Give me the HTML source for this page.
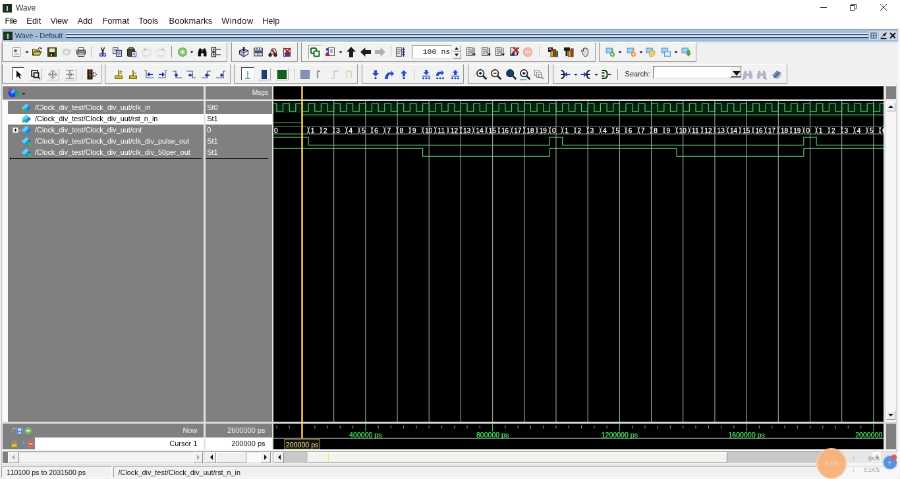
<!DOCTYPE html>
<html><head><meta charset="utf-8"><title>Wave</title>
<style>
html,body{margin:0;padding:0;width:900px;height:479px;overflow:hidden;background:#f0f0f0}
#root{position:absolute;left:0;top:0;width:1366px;height:728px;transform:scale(0.658858);transform-origin:0 0;background:#f0f0f0;font-family:"Liberation Sans",sans-serif;font-size:11px;color:#000;overflow:hidden;will-change:transform}
#root div{position:absolute;box-sizing:border-box}
#root svg{position:absolute;overflow:visible}
.t{white-space:pre}
.grp{background:#f2f2f2;border-left:1px solid #8c8c8c;border-top:1px solid #fff;border-right:1px solid #989898;border-bottom:1px solid #989898}
.sep{background:#a8a8a8;width:1px}
.sb{background:#f0f0f0}
.btn{background:#f0f0f0;border:1px solid #fff;border-right-color:#8a8a8a;border-bottom-color:#8a8a8a}
</style></head><body><div id="root">

<div class="" style="left:0.0px;top:0.0px;width:1366.0px;height:23.22px;background:#fff"></div>
<div class="" style="left:0.0px;top:23.22px;width:1366.0px;height:19.88px;background:#fff"></div>
<svg style="left:3.95px;top:5.77px" width="14" height="13" viewBox="0 0 14 13"><rect width="14" height="13" fill="#23281c"/><rect x="1.5" y="4" width="4" height="6" fill="#0d3b1e"/><rect x="8.5" y="4" width="4" height="6" fill="#0d3b1e"/><rect x="6" y="3" width="2" height="8" fill="#c9d2c0"/></svg>
<div class="t" style="left:23.98px;top:4.29px;height:16px;line-height:16px;font-size:12px;color:#2a2a2a">Wave</div>
<svg style="left:1241.59px;top:2.619999999999999px" width="16" height="16" viewBox="0 0 16 16"><path d="M3 8.5h10" stroke="#222" stroke-width="1" fill="none"/></svg>
<svg style="left:1287.42px;top:2.619999999999999px" width="16" height="16" viewBox="0 0 16 16"><path d="M3.5 5.5h7v7h-7zM5.5 5.5v-2h7v7h-2" stroke="#222" stroke-width="1" fill="none"/></svg>
<svg style="left:1333.11px;top:2.619999999999999px" width="16" height="16" viewBox="0 0 16 16"><path d="M3 3l10 10M13 3L3 13" stroke="#222" stroke-width="1" fill="none"/></svg>
<div class="t" style="left:7.59px;top:24.48px;height:16px;line-height:16px;font-size:12.8px;letter-spacing:-0.7px;color:#111">File</div>
<div class="t" style="left:40.37px;top:24.48px;height:16px;line-height:16px;font-size:12.8px;letter-spacing:0px;color:#111">Edit</div>
<div class="t" style="left:76.5px;top:24.48px;height:16px;line-height:16px;font-size:12.8px;letter-spacing:-0.3px;color:#111">View</div>
<div class="t" style="left:117.48px;top:24.48px;height:16px;line-height:16px;font-size:12.8px;letter-spacing:0px;color:#111">Add</div>
<div class="t" style="left:155.42px;top:24.48px;height:16px;line-height:16px;font-size:12.8px;letter-spacing:0px;color:#111">Format</div>
<div class="t" style="left:210.36px;top:24.48px;height:16px;line-height:16px;font-size:12.8px;letter-spacing:0px;color:#111">Tools</div>
<div class="t" style="left:256.5px;top:24.48px;height:16px;line-height:16px;font-size:12.8px;letter-spacing:0.2px;color:#111">Bookmarks</div>
<div class="t" style="left:336.19px;top:24.48px;height:16px;line-height:16px;font-size:12.8px;letter-spacing:0.5px;color:#111">Window</div>
<div class="t" style="left:398.11px;top:24.48px;height:16px;line-height:16px;font-size:12.8px;letter-spacing:0px;color:#111">Help</div>
<div class="" style="left:3.04px;top:43.71px;width:1360.38px;height:19.73px;background:#a6bdd9;border-top:1px solid #93a8c2;border-bottom:1px solid #8fa4bf"></div>
<svg style="left:4.55px;top:47.96px" width="14" height="13" viewBox="0 0 14 13"><rect width="14" height="13" fill="#1d2a1c"/><rect x="1.5" y="3" width="4.5" height="7" fill="#0c4a22"/><rect x="8" y="3" width="4.5" height="7" fill="#0c4a22"/><rect x="6" y="3" width="2" height="8" fill="#b9c8b6"/></svg>
<div class="t" style="left:22.77px;top:46.34px;height:16px;line-height:16px;font-size:11px;color:#1b3552">Wave - Default</div>
<div class="" style="left:1057.89px;top:63.44px;width:305.53px;height:3.95px;background:#e4ebf5"></div>
<div class="" style="left:100.17px;top:50.09px;width:1218.02px;height:1.52px;background:#dbe9f8"></div>
<div class="" style="left:100.17px;top:51.6px;width:1218.02px;height:1.82px;background:#2b435f"></div>
<div class="" style="left:100.17px;top:54.03px;width:1218.02px;height:1.82px;background:#dbe9f8"></div>
<div class="" style="left:100.17px;top:56.46px;width:1218.02px;height:1.82px;background:#2b435f"></div>
<svg style="left:1319.23px;top:46.88px" width="14" height="14" viewBox="0 0 14 14"><rect width="14" height="14" fill="#c9d8ea"/><path d="M3 3h8v8h-8zM7 3v8M3 7h8" stroke="#36506e" stroke-width="1.2" fill="none"/></svg>
<svg style="left:1333.65px;top:46.88px" width="14" height="14" viewBox="0 0 14 14"><rect width="14" height="14" fill="#c9d8ea"/><path d="M3 10l4-4 2 2 3-6-6 3 2 2z" fill="#111"/><path d="M2.5 11.5h9" stroke="#111" stroke-width="1.5"/></svg>
<svg style="left:1348.38px;top:46.88px" width="14" height="14" viewBox="0 0 14 14"><rect width="14" height="14" fill="#c9d8ea"/><path d="M3 3l8 8M11 3l-8 8" stroke="#111" stroke-width="2" fill="none"/></svg>
<div class="grp" style="left:3.49px;top:64.2px;width:341.8px;height:30.2px;"></div>
<div class="grp" style="left:350.61px;top:64.2px;width:100.93px;height:30.2px;"></div>
<div class="grp" style="left:456.85px;top:64.2px;width:446.68px;height:30.2px;"></div>
<div class="grp" style="left:908.69px;top:64.2px;width:148.74px;height:30.2px;"></div>
<div class="grp" style="left:3.49px;top:97.44px;width:150.87px;height:29.29px;"></div>
<div class="grp" style="left:159.37px;top:97.44px;width:190.63px;height:29.29px;"></div>
<div class="grp" style="left:355.16px;top:97.44px;width:188.2px;height:29.29px;"></div>
<div class="grp" style="left:548.98px;top:97.44px;width:155.27px;height:29.29px;"></div>
<div class="grp" style="left:710.32px;top:97.44px;width:122.94px;height:29.29px;"></div>
<div class="grp" style="left:839.33px;top:97.44px;width:355.92px;height:29.29px;"></div>
<svg style="left:17.35px;top:70.62px" width="16" height="16" viewBox="0 0 16 16"><rect x="2.5" y="1.5" width="11" height="13" fill="#fdfdfd" stroke="#8a8a8a"/><rect x="4.5" y="4" width="4" height="4" fill="#5a5f66"/><path d="M9.5 5h2M4.5 10h7M4.5 12h7" stroke="#9a9a9a"/></svg>
<svg style="left:48.16px;top:70.62px" width="16" height="16" viewBox="0 0 16 16"><path d="M1.500 13V3.500h4l1 1.500h5.500V7" fill="#cfc557" stroke="#2e2e0c"/><path d="M1.500 13l3-6h10.500l-3 6z" fill="#a89c26" stroke="#2e2e0c"/><path d="M4 10.500h8" stroke="#efe9a8" stroke-width="1.200"/><path d="M10 3c1.500-2 3.500-2 4.500 0" fill="none" stroke="#111" stroke-width="1.200"/><path d="M13 3h2.500V.800z" fill="#111"/></svg>
<svg style="left:70.92px;top:70.62px" width="16" height="16" viewBox="0 0 16 16"><rect x="1.5" y="1.5" width="13" height="13" fill="#4c4a14" stroke="#26250a"/><rect x="4" y="2.5" width="8" height="5.5" fill="#e9e7d2"/><rect x="5" y="10" width="6" height="4.5" fill="#1f1f0a"/><rect x="6" y="11" width="2" height="3" fill="#d8d6bd"/></svg>
<svg style="left:93.24px;top:70.62px" width="16" height="16" viewBox="0 0 16 16"><path d="M1.500 7.500c.500-5 8-6.500 11-2.500l2-1.500v5.500H9l2-2C9 4.500 5 5 4.500 8.500z" fill="#bfd6bf"/><path d="M14.500 8.500c-.500 5-8 6.500-11 2.500l-2 1.500V7H7L5 9c2 2.500 6 2 6.500-1.500z" fill="#cadcc9"/></svg>
<svg style="left:114.64px;top:70.62px" width="16" height="16" viewBox="0 0 16 16"><path d="M4 5V1.500h8V5" fill="#fff" stroke="#333"/><rect x="1.500" y="5" width="13" height="6.500" rx="1" fill="#8c8c8c" stroke="#222"/><rect x="3.500" y="9.500" width="9" height="5" fill="#f4f4f4" stroke="#222"/><path d="M5 12h6" stroke="#555"/></svg>
<svg style="left:148.03px;top:70.62px" width="16" height="16" viewBox="0 0 16 16"><path d="M5.500 1l3.500 9M10.500 1L7 10" stroke="#15151f" stroke-width="1.500" fill="none"/><circle cx="5.500" cy="12.300" r="2" fill="none" stroke="#4a3fc0" stroke-width="1.600"/><circle cx="10.500" cy="12.300" r="2" fill="none" stroke="#4a3fc0" stroke-width="1.600"/></svg>
<svg style="left:170.34px;top:70.62px" width="16" height="16" viewBox="0 0 16 16"><rect x="1.500" y="1.500" width="7.500" height="9" fill="#e9ecf4" stroke="#2a3350"/><path d="M3 4h4.500M3 6h4.500" stroke="#4a5578"/><rect x="6.500" y="5.500" width="8" height="9" fill="#e9ecf4" stroke="#1f2a68"/><path d="M8 8h5M8 10h5M8 12h5" stroke="#4a5588"/></svg>
<svg style="left:191.89px;top:70.62px" width="16" height="16" viewBox="0 0 16 16"><rect x="1.500" y="3" width="11" height="11.500" rx="1" fill="#47492a" stroke="#1d1e0c"/><rect x="4" y="1" width="6" height="3.500" fill="#8a8a78" stroke="#222"/><rect x="7.500" y="7.500" width="7" height="7.500" fill="#eef0f8" stroke="#1f2a68"/><path d="M9 10h4M9 12h4" stroke="#4a5588"/></svg>
<svg style="left:214.66px;top:70.62px" width="16" height="16" viewBox="0 0 16 16"><rect x="1.500" y="4.500" width="12" height="9" rx="2.500" fill="none" stroke="#d0d0d0" stroke-width="1.300" stroke-dasharray="3 1.500"/><path d="M3 1l.500 5.500 5-1.500z" fill="#c4c4c4"/><path d="M2 15h11" stroke="#d8d8d8"/></svg>
<svg style="left:236.06px;top:70.62px" width="16" height="16" viewBox="0 0 16 16"><rect x="2.500" y="4.500" width="12" height="9" rx="2.500" fill="none" stroke="#d0d0d0" stroke-width="1.300" stroke-dasharray="3 1.500"/><path d="M13 1l-.500 5.500-5-1.500z" fill="#c4c4c4"/><path d="M3 15h11" stroke="#d8d8d8"/></svg>
<svg style="left:268.99px;top:70.62px" width="16" height="16" viewBox="0 0 16 16"><defs><radialGradient id="gp" cx=".5" cy=".5" r=".5"><stop offset="0" stop-color="#c4e6b8"/><stop offset=".65" stop-color="#8ccb7a"/><stop offset="1" stop-color="#58a648"/></radialGradient></defs><circle cx="8" cy="8" r="7" fill="url(#gp)"/><path d="M8 5.500v5M5.500 8h5" stroke="#fff" stroke-width="1.700"/></svg>
<svg style="left:299.35px;top:70.62px" width="16" height="16" viewBox="0 0 16 16"><path d="M1.500 14.500V8.500l2-6H6l1 4.500h2l1-4.500h2.500l2 6v6H10V10H6v4.500z" fill="#0d0d0d"/><path d="M6.500 5h3" stroke="#0d0d0d" stroke-width="2"/></svg>
<svg style="left:319.54px;top:70.62px" width="16" height="16" viewBox="0 0 16 16"><rect x="1.500" y="1" width="6" height="6" fill="#fff" stroke="#111" stroke-width="1.200"/><rect x="1.500" y="9" width="6" height="6" fill="#fff" stroke="#111" stroke-width="1.200"/><path d="M3 4h3M4.500 2.500v3M3 12h3M4.500 10.500v3M7.500 4H15M7.500 12H15M4.500 7v2" stroke="#111" stroke-width="1.100"/></svg>
<svg style="left:362.34px;top:70.62px" width="16" height="16" viewBox="0 0 16 16"><path d="M8 3.500l6.500 2.500v5L8 15l-6.500-4V6z" fill="#f0f1f6" stroke="#1d2450" stroke-width="1.100"/><path d="M1.500 6L8 9l6.500-3M8 9v6" stroke="#1d2450" fill="none" stroke-width="1.100"/><path d="M3 8.500l3.500 2M3 10.500l3.500 2" stroke="#59608c"/><path d="M6.800 0h2.400v4.500H11L8 7.500 5 4.500h1.800z" fill="#14183c"/></svg>
<svg style="left:383.59px;top:70.62px" width="16" height="16" viewBox="0 0 16 16"><rect x="1.500" y="2.500" width="13" height="11.500" fill="#a9abb3" stroke="#4e4e58"/><rect x="3" y="1" width="2.500" height="4" fill="#f4f4f4" stroke="#444" stroke-width=".6"/><rect x="6.800" y="1" width="2.500" height="4" fill="#f4f4f4" stroke="#444" stroke-width=".6"/><rect x="10.500" y="1" width="2.500" height="4" fill="#f4f4f4" stroke="#444" stroke-width=".6"/><rect x="2.500" y="6.500" width="11" height="2.500" fill="#2f3a68"/><rect x="3" y="10.500" width="3" height="2.500" fill="#e4e4e4"/><rect x="10" y="10.500" width="3" height="2.500" fill="#e4e4e4"/></svg>
<svg style="left:405.59px;top:70.62px" width="16" height="16" viewBox="0 0 16 16"><path d="M3 12l4-9h5l2 7z" fill="#d9d9d9" stroke="#333"/><path d="M6 4l5 6" stroke="#a01818" stroke-width="2"/><circle cx="4" cy="12.500" r="2.200" fill="#7a1010" stroke="#220505"/><circle cx="12" cy="12.500" r="2.200" fill="#7a1010" stroke="#220505"/></svg>
<svg style="left:427.6px;top:70.62px" width="16" height="16" viewBox="0 0 16 16"><rect x="2.500" y="2.500" width="10" height="12" fill="#f6f6f6" stroke="#444"/><path d="M4 10l4-4 2 3 3-3v8H4z" fill="#3b3f8c"/><path d="M3 2l10 9M13 2L4 11" stroke="#c0161c" stroke-width="2.200"/></svg>
<svg style="left:492.87px;top:70.62px" width="16" height="16" viewBox="0 0 16 16"><rect x="5.500" y="1.500" width="9" height="12" fill="#f2f2f2" stroke="#555"/><path d="M8 5h4M8 8h4" stroke="#444"/><circle cx="4" cy="4" r="2.300" fill="#2c55b8"/><path d="M1 14c0-4 1-6 3-6s3 2 3 6z" fill="#b4262a"/><path d="M2 10h4" stroke="#2c55b8" stroke-width="2"/></svg>
<svg style="left:525.2px;top:70.62px" width="16" height="16" viewBox="0 0 16 16"><path d="M8 0l7 7.500h-4V16H5V7.500H1z" fill="#1c1c1c"/></svg>
<svg style="left:547.2px;top:70.62px" width="16" height="16" viewBox="0 0 16 16"><path d="M0 8l7.500-7v4H16v6H7.500v4z" fill="#1c1c1c"/></svg>
<svg style="left:568.76px;top:70.62px" width="16" height="16" viewBox="0 0 16 16"><path d="M16 8L8.500 1v4H0v6h8.500v4z" fill="#b0b0b0"/></svg>
<svg style="left:600.33px;top:70.62px" width="16" height="16" viewBox="0 0 16 16"><rect x="1.500" y="1.500" width="8" height="13" fill="#e2e2e2" stroke="#555"/><path d="M3 4h3l2 2M3 7h4M3 10h4" stroke="#555" fill="none"/><path d="M12.500 1v14M10.500 4h4M10.500 8h4M10.500 12h4" stroke="#1c1c6c" stroke-width="1.300"/></svg>
<svg style="left:706.87px;top:70.62px" width="16" height="16" viewBox="0 0 16 16"><rect x="1.500" y="1.500" width="8.500" height="12" fill="#d9d9d9" stroke="#555"/><path d="M3 4h3l2 2v4M3 7h3M3 10h3" stroke="#555" fill="none"/><path d="M12.500 1.500v10" stroke="#14142c" stroke-width="1.300"/><path d="M10 10.500h5l-2.500 4z" fill="#14142c"/></svg>
<svg style="left:729.64px;top:70.62px" width="16" height="16" viewBox="0 0 16 16"><rect x="1.500" y="1.500" width="8.500" height="12" fill="#d9d9d9" stroke="#555"/><path d="M3 4h3l2 2v4M3 7h3M3 10h3" stroke="#555" fill="none"/><path d="M12.500 1.500v10" stroke="#14142c" stroke-width="1.300"/><path d="M10 10.500h5l-2.500 4z" fill="#14142c"/></svg>
<svg style="left:750.89px;top:70.62px" width="16" height="16" viewBox="0 0 16 16"><rect x="1.500" y="1.500" width="8.500" height="12" fill="#d9d9d9" stroke="#555"/><path d="M3 4h3l2 2v4M3 7h3M3 10h3" stroke="#555" fill="none"/><path d="M12.500 1.500v10" stroke="#14142c" stroke-width="1.300"/><path d="M10 10.500h5l-2.500 4z" fill="#14142c"/></svg>
<svg style="left:773.2px;top:70.62px" width="16" height="16" viewBox="0 0 16 16"><rect x="1.500" y="1.500" width="9" height="12" fill="#d9d9d9" stroke="#555"/><path d="M3 11l3-4 2 2v4H3z" fill="#2b2f6c"/><path d="M6 1l8.500 8M14.500 1L6 9" stroke="#b0101c" stroke-width="2.200"/><path d="M12.500 9v4" stroke="#14142c" stroke-width="1.300"/></svg>
<svg style="left:793.39px;top:70.62px" width="16" height="16" viewBox="0 0 16 16"><path d="M5 1.500h6L14.500 5v6L11 14.500H5L1.500 11V5z" fill="#f0b5a8" stroke="#eaa596"/><path d="M5 6v4M8 5v5M11 6v4" stroke="#fbe6e0" stroke-width="1.600"/></svg>
<svg style="left:830.57px;top:70.62px" width="16" height="16" viewBox="0 0 16 16"><rect x="1" y="1" width="7" height="7" fill="#1c1c1c"/><path d="M2.500 2.500h3v2h-3z" fill="#e6e6e6"/><rect x="5" y="6" width="4" height="9" fill="#d8b820" stroke="#5a4a08"/><rect x="9" y="4" width="3.500" height="11" fill="#c23a1c" stroke="#5a1408"/><rect x="12.500" y="7" width="3" height="8" fill="#3a8a3a" stroke="#184818"/><path d="M0 15.500h16" stroke="#b9b9b9"/></svg>
<svg style="left:854.86px;top:70.62px" width="16" height="16" viewBox="0 0 16 16"><rect x="1" y="1" width="9" height="5" fill="#1c1c1c"/><path d="M5 3v11" stroke="#1c1c1c" stroke-width="3"/><rect x="7.500" y="6" width="4" height="9" fill="#d8b820" stroke="#5a4a08"/><rect x="11.500" y="3" width="3.500" height="12" fill="#c23a1c" stroke="#5a1408"/><path d="M0 15.500h16" stroke="#b9b9b9"/></svg>
<svg style="left:879.9px;top:70.62px" width="16" height="16" viewBox="0 0 16 16"><path d="M4 9L2.500 7c-1-1.500 1-2.500 2-1l1 1V3c0-1.200 1.800-1.200 1.800 0V2.500c0-1.300 1.800-1.300 1.800 0V3c0-1.200 1.800-1.200 1.800 0v1c0-1 1.700-1 1.700 0v6c0 3-1.600 4.500-4 4.500S5 13 4 9z" fill="#dcdcdc" stroke="#3c3c3c"/></svg>
<svg style="left:919.06px;top:70.62px" width="16" height="16" viewBox="0 0 16 16"><rect x="1" y="2" width="9.500" height="7.500" fill="#86c2ee" stroke="#5a9ed8"/><path d="M2.500 4h6.500M2.500 6h6.500" stroke="#d6ebfa"/><path d="M10.500 3.500v5" stroke="#4aa83c" stroke-width="1.800"/><circle cx="10.500" cy="11.500" r="2.600" fill="#f4f4f4" stroke="#4aa83c" stroke-width="1.800"/></svg>
<svg style="left:950.78px;top:70.62px" width="16" height="16" viewBox="0 0 16 16"><rect x="1" y="2" width="9.500" height="7.500" fill="#86c2ee" stroke="#5a9ed8"/><path d="M2.500 4h6.500M2.500 6h6.500" stroke="#d6ebfa"/><path d="M10.500 3.500v5" stroke="#e8902c" stroke-width="1.800"/><circle cx="10.500" cy="11.500" r="2.600" fill="#f4f4f4" stroke="#e8902c" stroke-width="1.800"/></svg>
<svg style="left:980.07px;top:70.62px" width="16" height="16" viewBox="0 0 16 16"><rect x="1" y="2" width="9.500" height="7.500" fill="#86c2ee" stroke="#5a9ed8"/><path d="M2.500 4h6.500M2.500 6h6.500" stroke="#d6ebfa"/><path d="M6 6h8v5l-3 3.500H6z" fill="#f0d060" stroke="#c8a030" stroke-width=".8"/></svg>
<svg style="left:1002.84px;top:70.62px" width="16" height="16" viewBox="0 0 16 16"><rect x="1" y="2" width="9.500" height="7.500" fill="#86c2ee" stroke="#5a9ed8"/><path d="M2.500 4h6.500M2.500 6h6.500" stroke="#d6ebfa"/><rect x="5.500" y="7" width="9" height="7.500" fill="#b4dcf6" stroke="#5a9ed8"/><path d="M7 10h6M7 12h6" stroke="#fff"/></svg>
<svg style="left:1034.26px;top:70.62px" width="16" height="16" viewBox="0 0 16 16"><rect x="1" y="2" width="9.500" height="7.500" fill="#86c2ee" stroke="#5a9ed8"/><path d="M2.500 4h6.500M2.500 6h6.500" stroke="#d6ebfa"/><path d="M9 5h4v4.500h2.500L11 15 6.500 9.500H9z" fill="#4cae3c"/></svg>
<div class="" style="left:467.93px;top:67.84px;width:20.79px;height:22.16px;background:#fafafa;border:1px solid #9a9a9a;border-right-color:#fff;border-bottom-color:#fff"></div>
<svg style="left:470.1px;top:70.62px" width="16" height="16" viewBox="0 0 16 16"><rect x="2" y="2" width="8" height="8" rx="1.500" fill="#f4f4f4" stroke="#17681f" stroke-width="2"/><rect x="6.500" y="6.500" width="8" height="8" rx="1.500" fill="#f4f4f4" stroke="#17681f" stroke-width="2"/></svg>
<svg style="left:36.52px;top:75.08px" width="8" height="8" viewBox="0 0 8 8"><path d="M1.5 3h5l-2.5 3z" fill="#111"/></svg>
<svg style="left:287.41px;top:75.08px" width="8" height="8" viewBox="0 0 8 8"><path d="M1.5 3h5l-2.5 3z" fill="#111"/></svg>
<svg style="left:512.5px;top:75.08px" width="8" height="8" viewBox="0 0 8 8"><path d="M1.5 3h5l-2.5 3z" fill="#111"/></svg>
<svg style="left:937.02px;top:75.08px" width="8" height="8" viewBox="0 0 8 8"><path d="M1.5 3h5l-2.5 3z" fill="#111"/></svg>
<svg style="left:968.9px;top:75.08px" width="8" height="8" viewBox="0 0 8 8"><path d="M1.5 3h5l-2.5 3z" fill="#111"/></svg>
<svg style="left:1022.02px;top:75.08px" width="8" height="8" viewBox="0 0 8 8"><path d="M1.5 3h5l-2.5 3z" fill="#111"/></svg>
<div class="" style="left:138.12px;top:69.82px;width:1.06px;height:17.61px;background:#bdbdbd"></div>
<div class="" style="left:259.54px;top:69.82px;width:1.06px;height:17.61px;background:#8a8a8a"></div>
<div class="" style="left:592.69px;top:69.82px;width:1.06px;height:17.61px;background:#c4c4c4"></div>
<div class="" style="left:817.63px;top:69.82px;width:1.06px;height:17.61px;background:#cdcdcd"></div>
<div class="" style="left:624.87px;top:68.6px;width:61.17px;height:20.34px;background:#fff;border:1px solid #7a7a7a;border-right-color:#e3e3e3;border-bottom-color:#e3e3e3"></div>
<div class="t" style="right:682.7px;top:70.92px;height:16px;line-height:16px;font-size:11.6px;font-family:'Liberation Mono',monospace;color:#111">100 ns</div>
<div class="btn" style="left:686.95px;top:68.6px;width:13.05px;height:10.17px;"></div>
<div class="btn" style="left:686.95px;top:78.77px;width:13.05px;height:10.17px;"></div>
<svg style="left:689.47px;top:70.42px" width="8" height="7" viewBox="0 0 8 7"><path d="M1 5.500h6L4 1.500z" fill="#111"/></svg>
<svg style="left:689.47px;top:80.43px" width="8" height="7" viewBox="0 0 8 7"><path d="M1 1.500h6L4 5.500z" fill="#111"/></svg>
<div class="" style="left:17.91px;top:102.45px;width:18.82px;height:19.58px;background:#fff;border:1px solid #444;border-right-color:#e8e8e8;border-bottom-color:#e8e8e8"></div>
<div class="" style="left:44.77px;top:102.75px;width:19.12px;height:19.28px;background:#f1f1f1;border:1px solid #fbfbfb;border-right-color:#b4b4b4;border-bottom-color:#b4b4b4"></div>
<div class="" style="left:70.88px;top:102.75px;width:19.12px;height:19.28px;background:#f1f1f1;border:1px solid #fbfbfb;border-right-color:#b4b4b4;border-bottom-color:#b4b4b4"></div>
<div class="" style="left:96.68px;top:102.75px;width:19.12px;height:19.28px;background:#f1f1f1;border:1px solid #fbfbfb;border-right-color:#b4b4b4;border-bottom-color:#b4b4b4"></div>
<div class="" style="left:365.78px;top:102.45px;width:20.49px;height:19.58px;background:#fff;border:1px solid #444;border-right-color:#e0e0e0;border-bottom-color:#e0e0e0"></div>
<div class="" style="left:390.68px;top:102.75px;width:20.03px;height:19.58px;background:#f1f1f1;border:1px solid #fbfbfb;border-right-color:#a4a4a4;border-bottom-color:#a4a4a4"></div>
<div class="" style="left:417.54px;top:102.75px;width:20.03px;height:19.58px;background:#f1f1f1;border:1px solid #fbfbfb;border-right-color:#a4a4a4;border-bottom-color:#a4a4a4"></div>
<svg style="left:19.78px;top:104.62px" width="16" height="16" viewBox="0 0 16 16"><path d="M5 2v11l2.800-2.600 2 4.200 1.800-.8-2-4.200H13z" fill="#111"/></svg>
<svg style="left:46.34px;top:104.62px" width="16" height="16" viewBox="0 0 16 16"><rect x="2" y="2" width="9" height="9" fill="none" stroke="#111" stroke-width="1.600"/><rect x="5.500" y="5.500" width="7" height="7" fill="#f2f2f2" stroke="#111" stroke-width="1.800"/><path d="M12 12l3 3" stroke="#111" stroke-width="1.500"/></svg>
<svg style="left:72.44px;top:104.62px" width="16" height="16" viewBox="0 0 16 16"><path d="M8 1l2.500 3h-2v3.500H12v-2l3 2.500-3 2.500v-2H8.500V12h2L8 15l-2.500-3h2V8.500H4v2L1 8l3-2.500v2h3.500V4h-2z" fill="#d8d8d8" stroke="#777" stroke-width=".8"/></svg>
<svg style="left:98.24px;top:104.62px" width="16" height="16" viewBox="0 0 16 16"><path d="M2 2h5M2 14h5M9 2h5M9 14h5M8 1v14" stroke="#666" stroke-width="1.200" fill="none"/><path d="M2 8h4M10 8h4" stroke="#555" stroke-width="1.200"/><path d="M5 6l2 2-2 2zM11 6L9 8l2 2z" fill="#555"/></svg>
<svg style="left:132.39px;top:104.62px" width="16" height="16" viewBox="0 0 16 16"><rect x="1" y="1" width="7" height="14" fill="#26180c" stroke="#111"/><circle cx="4.500" cy="4" r="2" fill="#e02020"/><circle cx="4.500" cy="8.200" r="1.800" fill="#7a6a10"/><circle cx="4.500" cy="12" r="1.800" fill="#2f5a1c"/><path d="M10 4l5 4-5 4z" fill="#f4f4f4" stroke="#333"/></svg>
<svg style="left:171.55px;top:104.62px" width="16" height="16" viewBox="0 0 16 16"><path d="M8 1v9" stroke="#7a6e0c" stroke-width="1.600"/><rect x="2.500" y="10" width="11" height="4.500" fill="#cdbf2a" stroke="#6a5f0a"/><path d="M8 6h5" stroke="#a8991c" stroke-width="1.400"/><path d="M11.500 1.500v4M9.500 3.500h4" stroke="#a8991c" stroke-width="1.300"/></svg>
<svg style="left:194.32px;top:104.62px" width="16" height="16" viewBox="0 0 16 16"><path d="M8 1v9" stroke="#7a6e0c" stroke-width="1.600"/><rect x="2.500" y="10" width="11" height="4.500" fill="#cdbf2a" stroke="#6a5f0a"/><path d="M8 6h5" stroke="#a8991c" stroke-width="1.400"/></svg>
<svg style="left:218.15px;top:104.62px" width="16" height="16" viewBox="0 0 16 16"><path d="M1 2h3v11h11" stroke="#3f6684" fill="none" stroke-width="1.200"/><path d="M5 8l4-3.500v2.500h5v2H9v2.500z" fill="#1c1cd0"/></svg>
<svg style="left:238.64px;top:104.62px" width="16" height="16" viewBox="0 0 16 16"><path d="M15 2h-3v11H1" stroke="#3f6684" fill="none" stroke-width="1.200"/><path d="M11 8L7 4.500V7H2v2h5v2.500z" fill="#1c1cd0"/></svg>
<svg style="left:260.65px;top:104.62px" width="16" height="16" viewBox="0 0 16 16"><path d="M1 3h5v10h9" stroke="#3b5872" fill="none" stroke-width="1.200"/><path d="M9 9l-3-2.500v2H4v1h2v2z" fill="#1c1cc4" stroke="#141470" stroke-width=".5"/></svg>
<svg style="left:281.9px;top:104.62px" width="16" height="16" viewBox="0 0 16 16"><path d="M1 3h9v10h5" stroke="#3b5872" fill="none" stroke-width="1.200"/><path d="M4 9l3-2.500v2h3v1H7v2z" fill="#1c1cc4" stroke="#141470" stroke-width=".5"/></svg>
<svg style="left:304.66px;top:104.62px" width="16" height="16" viewBox="0 0 16 16"><path d="M15 3h-5v10H1" stroke="#3b5872" fill="none" stroke-width="1.200"/><path d="M6 9l3-2.500v2h4v1H9v2z" fill="#1c1cc4" stroke="#141470" stroke-width=".5"/></svg>
<svg style="left:327.43px;top:104.62px" width="16" height="16" viewBox="0 0 16 16"><path d="M15 3h-3v10H1" stroke="#3b5872" fill="none" stroke-width="1.200"/><path d="M7 9l3-2.500v2h2v1h-2v2z" fill="#1c1cc4" stroke="#141470" stroke-width=".5"/></svg>
<svg style="left:368.11px;top:104.62px" width="16" height="16" viewBox="0 0 16 16"><path d="M8 3v11M4 14h8" stroke="#4c9a6a" stroke-width="1.400"/></svg>
<svg style="left:392.69px;top:104.62px" width="16" height="16" viewBox="0 0 16 16"><rect x="4.500" y="1.500" width="7" height="13" fill="#1f3f7c" stroke="#16305e"/></svg>
<svg style="left:419.56px;top:104.62px" width="16" height="16" viewBox="0 0 16 16"><rect x="1.500" y="1.500" width="13" height="13" fill="#14601f" stroke="#0d4616"/></svg>
<svg style="left:454.92px;top:104.62px" width="16" height="16" viewBox="0 0 16 16"><rect x="1.500" y="1.500" width="13" height="13" fill="#8493b4" stroke="#7383a4"/></svg>
<svg style="left:476.17px;top:104.62px" width="16" height="16" viewBox="0 0 16 16"><path d="M6 14V3h4" stroke="#8a9a8e" stroke-width="2.200" fill="none"/></svg>
<svg style="left:500.46px;top:104.62px" width="16" height="16" viewBox="0 0 16 16"><path d="M2 14h5V3h7" stroke="#c4cbc0" stroke-width="1.500" fill="none"/></svg>
<svg style="left:521.7px;top:104.62px" width="16" height="16" viewBox="0 0 16 16"><path d="M4 14V3h7v11" stroke="#ccd2b4" stroke-width="1.500" fill="none"/></svg>
<svg style="left:561.62px;top:104.62px" width="16" height="16" viewBox="0 0 16 16"><path d="M8 11l-5-5h3V1.500h4V6h3z" fill="#1e50d8"/><circle cx="8" cy="13.600" r="1.700" fill="#1a3ca8"/></svg>
<svg style="left:582.87px;top:104.62px" width="16" height="16" viewBox="0 0 16 16"><path d="M2 13c0-7 5-9 9-8V2l4 5-4 4V8c-3-.5-5 1-5 5z" fill="#1e50d8"/><path d="M1 11h5v4H1z" fill="#2a5ae0"/></svg>
<svg style="left:605.18px;top:104.62px" width="16" height="16" viewBox="0 0 16 16"><path d="M8 1.500l5 5h-3V11H6V6.500H3z" fill="#1e50d8"/><circle cx="8" cy="13.600" r="1.700" fill="#1a3ca8"/></svg>
<svg style="left:638.57px;top:104.62px" width="16" height="16" viewBox="0 0 16 16"><path d="M8 9L3.500 4.500H6V1h4v3.500h2.500z" fill="#1e50d8"/><path d="M2 10.500h12" stroke="#1e50d8" stroke-width="1.500"/><circle cx="3.500" cy="13.800" r="1.500" fill="#1a3ca8"/><circle cx="8" cy="13.800" r="1.500" fill="#1a3ca8"/><circle cx="12.500" cy="13.800" r="1.500" fill="#1a3ca8"/></svg>
<svg style="left:660.28px;top:104.62px" width="16" height="16" viewBox="0 0 16 16"><path d="M2 10c0-6 5-7 8-6V1.500l4 4-4 4V7c-2-.5-4 .5-4 3z" fill="#1e50d8"/><circle cx="3.500" cy="13.800" r="1.500" fill="#1a3ca8"/><circle cx="8" cy="13.800" r="1.500" fill="#1a3ca8"/><circle cx="12.500" cy="13.800" r="1.500" fill="#1a3ca8"/></svg>
<svg style="left:682.59px;top:104.62px" width="16" height="16" viewBox="0 0 16 16"><path d="M8 1l4.500 4.500H10V9H6V5.500H3.500z" fill="#1e50d8"/><path d="M2 10.500h12" stroke="#1e50d8" stroke-width="1.500"/><circle cx="3.500" cy="13.800" r="1.500" fill="#1a3ca8"/><circle cx="8" cy="13.800" r="1.500" fill="#1a3ca8"/><circle cx="12.500" cy="13.800" r="1.500" fill="#1a3ca8"/></svg>
<svg style="left:723.11px;top:104.62px" width="16" height="16" viewBox="0 0 16 16"><g transform="translate(-1.2 -1.2) scale(1.14)"><path d="M9.500 9.500l5 5" stroke="#222" stroke-width="2.400"/><circle cx="6.500" cy="6.500" r="4.600" fill="#fff" stroke="#222" stroke-width="1.500"/><path d="M4.500 6.500h4M6.500 4.500v4" stroke="#1a1a6a" stroke-width="1.600"/></g></svg>
<svg style="left:744.82px;top:104.62px" width="16" height="16" viewBox="0 0 16 16"><g transform="translate(-1.2 -1.2) scale(1.14)"><path d="M9.500 9.500l5 5" stroke="#222" stroke-width="2.400"/><circle cx="6.500" cy="6.500" r="4.600" fill="#fff" stroke="#222" stroke-width="1.500"/><path d="M4.500 6.500h4" stroke="#a03030" stroke-width="1.600"/></g></svg>
<svg style="left:767.58px;top:104.62px" width="16" height="16" viewBox="0 0 16 16"><g transform="translate(-1.2 -1.2) scale(1.14)"><path d="M9.500 9.500l5 5" stroke="#222" stroke-width="2.400"/><circle cx="6.500" cy="6.500" r="4.600" fill="#173d74" stroke="#122c55" stroke-width="1.500"/></g></svg>
<svg style="left:789.29px;top:104.62px" width="16" height="16" viewBox="0 0 16 16"><g transform="translate(-1.2 -1.2) scale(1.14)"><path d="M9.500 9.500l5 5" stroke="#222" stroke-width="2.400"/><circle cx="6.500" cy="6.500" r="4.600" fill="#fff" stroke="#222" stroke-width="1.500"/><path d="M4.500 6.500h4M6.500 4.500v4" stroke="#1a1a6a" stroke-width="1.600"/><path d="M1 15h9" stroke="#58b8d8" stroke-width="1.500"/></g></svg>
<svg style="left:810.08px;top:104.62px" width="16" height="16" viewBox="0 0 16 16"><rect x="1.500" y="1.500" width="7" height="8" fill="#f4f4f4" stroke="#8a8a9a"/><rect x="4.500" y="4.500" width="7" height="8" fill="#f4f4f4" stroke="#8a8a9a"/><circle cx="10" cy="10" r="2.600" fill="#fff" stroke="#7a7a8a" stroke-width="1.200"/><path d="M12 12l3 3" stroke="#7a7a8a" stroke-width="1.600"/></svg>
<svg style="left:849.54px;top:104.62px" width="16" height="16" viewBox="0 0 16 16"><path d="M1.500 2c6.500 0 6.500 12 0 12M1.500 8h4" fill="none" stroke="#0c0c1c" stroke-width="2"/><path d="M6.500 8l4.500-4v3h4.500v2H11v3z" fill="#1838e0"/></svg>
<svg style="left:881.42px;top:104.62px" width="16" height="16" viewBox="0 0 16 16"><path d="M14.500 2c-6.500 0-6.500 12 0 12M10 8h4.500" fill="none" stroke="#0c0c1c" stroke-width="2"/><path d="M9.500 8L5 4v3H.500v2H5v3z" fill="#1838e0"/></svg>
<svg style="left:911.77px;top:104.62px" width="16" height="16" viewBox="0 0 16 16"><path d="M1.500 2h3.500c6.500 0 6.500 12 0 12H1.500M1.500 5.500h4M1.500 10.500h4" fill="none" stroke="#10200c" stroke-width="2"/><path d="M8.500 5l4 3-4 3z" fill="#2c7c1c"/><path d="M11 8h4.500" stroke="#111" stroke-width="1.600"/></svg>
<svg style="left:1127.3px;top:104.62px" width="16" height="16" viewBox="0 0 16 16"><path d="M1 14.500V8.500l2-6h3l1 4.500h2l1-4.500h3l2 6v6h-5V10H6v4.500z" fill="#b4b8c4"/><path d="M0 16l4-3" stroke="#9aa4c4" stroke-width="1.600"/></svg>
<svg style="left:1147.79px;top:104.62px" width="16" height="16" viewBox="0 0 16 16"><path d="M1 14.500V8.500l2-6h3l1 4.500h2l1-4.500h3l2 6v6h-5V10H6v4.500z" fill="#b4b8c4"/><path d="M11 12l4.500 3.500" stroke="#8c9cd0" stroke-width="1.800"/></svg>
<svg style="left:1170.86px;top:104.62px" width="16" height="16" viewBox="0 0 16 16"><path d="M1 9.500l7-7.500 7 3.500-7 8.500z" fill="#7d8eae"/><path d="M4 13l7-8" stroke="#4d5e80" stroke-width="2.200"/><path d="M8 15l7-7" stroke="#aebad4" stroke-width="2.200"/></svg>
<svg style="left:870.24px;top:109.07px" width="8" height="8" viewBox="0 0 8 8"><path d="M1.5 3h5l-2.5 3z" fill="#111"/></svg>
<svg style="left:901.05px;top:109.07px" width="8" height="8" viewBox="0 0 8 8"><path d="M1.5 3h5l-2.5 3z" fill="#111"/></svg>
<div class="" style="left:123.55px;top:103.82px;width:1.06px;height:17.61px;background:#c4c4c4"></div>
<div class="" style="left:445.77px;top:103.82px;width:1.06px;height:17.61px;background:#c4c4c4"></div>
<div class="" style="left:627.9px;top:103.82px;width:1.06px;height:17.61px;background:#c4c4c4"></div>
<div class="" style="left:936.77px;top:103.82px;width:1.06px;height:17.61px;background:#9a9a9a"></div>
<div class="t" style="left:948.61px;top:104.32px;height:16px;line-height:16px;font-size:11px;color:#222">Search:</div>
<div class="" style="left:991.11px;top:100.17px;width:134.48px;height:18.97px;background:#fff;border:1px solid #6a6a6a;border-right-color:#dcdcdc;border-bottom-color:#dcdcdc"></div>
<div class="btn" style="left:1107.98px;top:101.24px;width:16.09px;height:17.15px;"></div>
<svg style="left:1111.54px;top:106.1px" width="12" height="10" viewBox="0 0 12 10"><path d="M0 2h12L6 9z" fill="#111"/></svg>
<div class="" style="left:1110.25px;top:115.96px;width:14.42px;height:1.21px;background:#111"></div>
<div class="" style="left:4.25px;top:129.31px;width:1355.68px;height:1.67px;background:#fbfbfb"></div>
<div class="" style="left:4.25px;top:130.98px;width:304.47px;height:20.34px;background:#808080"></div>
<div class="" style="left:312.06px;top:130.98px;width:100.48px;height:20.34px;background:#808080"></div>
<div class="" style="left:415.11px;top:130.98px;width:926.3px;height:20.34px;background:#000"></div>
<div class="" style="left:1344.75px;top:130.98px;width:15.18px;height:19.28px;background:#808080"></div>
<div class="" style="left:4.25px;top:151.32px;width:1355.68px;height:1.97px;background:#ececec"></div>
<div class="" style="left:308.72px;top:130.98px;width:3.34px;height:573.26px;background:#e4e4e4"></div>
<div class="" style="left:412.53px;top:130.98px;width:2.58px;height:573.26px;background:#e4e4e4"></div>
<div class="" style="left:1341.41px;top:130.98px;width:3.34px;height:552.02px;background:#e4e4e4"></div>
<div class="" style="left:4.25px;top:153.3px;width:7.89px;height:486.9px;background:#fbfbfb"></div>
<div class="" style="left:12.14px;top:153.3px;width:296.57px;height:486.9px;background:#808080"></div>
<div class="" style="left:312.06px;top:153.3px;width:100.48px;height:486.9px;background:#808080"></div>
<div class="" style="left:415.11px;top:153.3px;width:926.3px;height:486.9px;background:#000"></div>
<svg style="left:11.29px;top:131.24px" width="19" height="18" viewBox="0 0 19 18"><circle cx="8" cy="10" r="6.500" fill="#1c2ce8"/><circle cx="5.500" cy="5.500" r="4" fill="#c43a9c"/><circle cx="7" cy="11" r="4.800" fill="#1a48f4"/><path d="M9 3.500l4 3-5 5-3-2z" fill="#30c8f0"/><path d="M11.500 6l6 1.500v7.500l-5 1.500z" fill="#22a070"/></svg>
<svg style="left:32.27px;top:138.06px" width="8" height="8" viewBox="0 0 8 8"><path d="M1.5 3h5l-2.5 3z" fill="#111"/></svg>
<div class="t" style="right:958.93px;top:132.85px;height:16px;line-height:16px;font-size:10.2px;color:#f4f4f4">Msgs</div>
<div class="" style="left:12.14px;top:172.57px;width:296.57px;height:16.39px;background:#fff"></div>
<div class="" style="left:312.06px;top:172.57px;width:100.48px;height:16.39px;background:#fff"></div>
<svg style="left:32.07px;top:156.27px" width="16" height="15" viewBox="0 0 16 15"><path d="M8 1l7 6.500L8 14 1 7.500z" fill="#1c98ee"/><path d="M8 1l3.500 3.200L4.500 11 1 7.500z" fill="#62d0fa"/><path d="M8 14l7-6.500-3.500-3.300z" fill="#1670d4" opacity=".7"/><path d="M1 13.500l6-1.500-2-1 2-2.500-1.500-1-2 2.500-1.500-1.500z" fill="#3cc43c"/></svg>
<div class="t" style="left:53.12px;top:155.31px;height:16px;line-height:16px;font-size:10.85px;color:#fff">/Clock_div_test/Clock_div_uut/clk_in</div>
<div class="t" style="left:314.18px;top:155.31px;height:16px;line-height:16px;font-size:11px;color:#fff">St0</div>
<svg style="left:32.07px;top:173.27px" width="16" height="15" viewBox="0 0 16 15"><path d="M8 1l7 6.500L8 14 1 7.500z" fill="#1c98ee"/><path d="M8 1l3.500 3.200L4.500 11 1 7.500z" fill="#62d0fa"/><path d="M8 14l7-6.500-3.500-3.300z" fill="#1670d4" opacity=".7"/><path d="M1 13.500l6-1.500-2-1 2-2.500-1.500-1-2 2.500-1.500-1.500z" fill="#3cc43c"/></svg>
<div class="t" style="left:53.12px;top:172.31px;height:16px;line-height:16px;font-size:10.85px;color:#000">/Clock_div_test/Clock_div_uut/rst_n_in</div>
<div class="t" style="left:314.18px;top:172.31px;height:16px;line-height:16px;font-size:11px;color:#000">St1</div>
<svg style="left:32.07px;top:190.27px" width="16" height="15" viewBox="0 0 16 15"><path d="M8 1l7 6.500L8 14 1 7.500z" fill="#1c98ee"/><path d="M8 1l3.500 3.200L4.500 11 1 7.500z" fill="#62d0fa"/><path d="M8 14l7-6.500-3.500-3.300z" fill="#1670d4" opacity=".7"/></svg>
<div class="t" style="left:53.12px;top:189.31px;height:16px;line-height:16px;font-size:10.85px;color:#fff">/Clock_div_test/Clock_div_uut/cnt</div>
<div class="t" style="left:314.18px;top:189.31px;height:16px;line-height:16px;font-size:11px;color:#fff">0</div>
<svg style="left:32.07px;top:207.27px" width="16" height="15" viewBox="0 0 16 15"><path d="M8 1l7 6.500L8 14 1 7.500z" fill="#1c98ee"/><path d="M8 1l3.500 3.200L4.500 11 1 7.500z" fill="#62d0fa"/><path d="M8 14l7-6.500-3.500-3.300z" fill="#1670d4" opacity=".7"/><path d="M15 14l-6-1.500 2-1-2-2.500 1.500-1 2 2.500 1.500-1.500z" fill="#3cc43c"/></svg>
<div class="t" style="left:53.12px;top:206.31px;height:16px;line-height:16px;font-size:10.85px;color:#fff">/Clock_div_test/Clock_div_uut/clk_div_pulse_out</div>
<div class="t" style="left:314.18px;top:206.31px;height:16px;line-height:16px;font-size:11px;color:#fff">St1</div>
<svg style="left:32.07px;top:224.26px" width="16" height="15" viewBox="0 0 16 15"><path d="M8 1l7 6.500L8 14 1 7.500z" fill="#1c98ee"/><path d="M8 1l3.500 3.200L4.500 11 1 7.500z" fill="#62d0fa"/><path d="M8 14l7-6.500-3.500-3.300z" fill="#1670d4" opacity=".7"/><path d="M15 14l-6-1.500 2-1-2-2.500 1.500-1 2 2.500 1.500-1.500z" fill="#3cc43c"/></svg>
<div class="t" style="left:53.12px;top:223.31px;height:16px;line-height:16px;font-size:10.85px;color:#fff">/Clock_div_test/Clock_div_uut/clk_div_50per_out</div>
<div class="t" style="left:314.18px;top:223.31px;height:16px;line-height:16px;font-size:11px;color:#fff">St1</div>
<div class="" style="left:18.52px;top:193.36px;width:9.11px;height:8.5px;background:#fff;border:1px solid #b0b0b0"></div>
<svg style="left:18.57px;top:193.11px" width="9" height="9" viewBox="0 0 9 9"><path d="M2.500 4.500h4M4.500 2.500v4" stroke="#000" stroke-width="1.300"/></svg>
<div class="" style="left:27.62px;top:197.01px;width:5.01px;height:1.06px;background:#d8d8d8"></div>
<div class="" style="left:14.57px;top:239.66px;width:290.96px;height:1.37px;background:#1a1a1a"></div>
<div class="" style="left:14.57px;top:237.99px;width:1.06px;height:4.86px;background:#1a1a1a"></div>
<div class="" style="left:312.36px;top:239.66px;width:95.01px;height:1.37px;background:#1a1a1a"></div>
<div class="" style="left:1344.75px;top:152.69px;width:15.18px;height:487.51px;background:#f6f6f6"></div>
<div class="btn" style="left:1344.75px;top:154.51px;width:14.57px;height:14.27px;"></div>
<svg style="left:1347.04px;top:158.1px" width="10" height="8" viewBox="0 0 10 8"><path d="M1 6h8L5 2z" fill="#111"/></svg>
<div class="btn" style="left:1344.75px;top:623.2px;width:14.57px;height:13.96px;"></div>
<svg style="left:1347.04px;top:626.48px" width="10" height="8" viewBox="0 0 10 8"><path d="M1 2h8L5 6z" fill="#111"/></svg>
<div class="" style="left:4.25px;top:640.2px;width:1355.68px;height:2.43px;background:#dcdcdc"></div>
<div class="" style="left:4.25px;top:642.93px;width:304.47px;height:21.25px;background:#808080"></div>
<div class="" style="left:312.06px;top:642.93px;width:100.48px;height:21.25px;background:#808080"></div>
<div class="" style="left:4.25px;top:664.18px;width:48.87px;height:17.76px;background:#808080"></div>
<div class="" style="left:53.12px;top:664.18px;width:255.59px;height:17.76px;background:#fff"></div>
<div class="" style="left:312.06px;top:664.18px;width:100.48px;height:17.76px;background:#fff"></div>
<div class="t" style="right:1066.54px;top:645.25px;height:16px;line-height:16px;font-size:11px;color:#f0f0f0">Now</div>
<div class="t" style="right:963.49px;top:645.25px;height:16px;line-height:16px;font-size:11px;color:#f0f0f0">2600000 ps</div>
<div class="t" style="right:1066.54px;top:664.98px;height:16px;line-height:16px;font-size:11px;color:#111">Cursor 1</div>
<div class="t" style="right:963.49px;top:664.98px;height:16px;line-height:16px;font-size:11px;color:#111">200000 ps</div>
<svg style="left:12.77px;top:647.5px" width="11.5" height="11.5" viewBox="0 0 11.5 11.5"><g transform="scale(.82)"><path d="M2 10l6-6 2 2-6 6H2z" fill="#9a9a9a" stroke="#666" stroke-width=".6"/><path d="M8 2h5v2H8z" fill="#b4b4b4"/></g></svg>
<svg style="left:24.3px;top:647.5px" width="11.5" height="11.5" viewBox="0 0 11.5 11.5"><g transform="scale(.82)"><rect x="1.500" y="2.500" width="11" height="10" fill="#4a78d8" stroke="#8aa8e8"/><rect x="4" y="3" width="6" height="4" fill="#dfe8fa"/><rect x="4.500" y="9" width="5" height="3.500" fill="#c8d4f0"/></g></svg>
<svg style="left:36.75px;top:647.5px" width="11.5" height="11.5" viewBox="0 0 11.5 11.5"><g transform="scale(.82)"><circle cx="7" cy="7" r="5.500" fill="#5cc04c" stroke="#9ad88c"/><path d="M7 4v6M4 7h6" stroke="#eaffea" stroke-width="1.600"/></g></svg>
<svg style="left:15.8px;top:667.84px" width="11.5" height="11.5" viewBox="0 0 11.5 11.5"><g transform="scale(.82)"><path d="M4 7V4.500a3 3 0 0 1 6 0V7" fill="none" stroke="#c8a848" stroke-width="1.400"/><rect x="2" y="6.500" width="10" height="6.500" fill="#e6b84a" stroke="#b88a2a"/></g></svg>
<svg style="left:28.4px;top:667.84px" width="11.5" height="11.5" viewBox="0 0 11.5 11.5"><g transform="scale(.82)"><path d="M2 12.500l6.500-7" stroke="#5a8ad0" stroke-width="2.400"/><path d="M7.500 6l2-4 3 3-4 2z" fill="#7aa8e8"/></g></svg>
<svg style="left:40.69px;top:667.84px" width="11.5" height="11.5" viewBox="0 0 11.5 11.5"><g transform="scale(.82)"><circle cx="7" cy="7" r="5.600" fill="#e0503c" stroke="#f0988c"/><path d="M4 7h6" stroke="#ffecec" stroke-width="1.800"/></g></svg>
<div class="" style="left:415.11px;top:642.63px;width:926.3px;height:39.31px;background:#000"></div>
<div class="" style="left:1344.75px;top:642.93px;width:15.18px;height:39.46px;background:#808080"></div>
<div class="" style="left:4.25px;top:681.94px;width:1355.68px;height:2.88px;background:#f7f7f7"></div>
<div class="" style="left:4.25px;top:684.82px;width:1355.68px;height:1.37px;background:#9a9a9a"></div>
<svg style="left:415.11px;top:130.98px;overflow:hidden" width="926.3" height="550.95" viewBox="0 0 926.3 550.95" font-family="Liberation Sans, sans-serif"><rect x="0" y="24.44" width="926.3" height="16.09" fill="#07200d"/><rect x="43.47" y="41.44" width="926.3" height="4.55" fill="#061a0b"/><path d="M91.66 22.01V509.21" stroke="#a4a4a4" stroke-width="1.1"/><path d="M139.85 22.01V509.21" stroke="#a4a4a4" stroke-width="1.1"/><path d="M188.04 22.01V509.21" stroke="#a4a4a4" stroke-width="1.1"/><path d="M236.23 22.01V509.21" stroke="#a4a4a4" stroke-width="1.1"/><path d="M284.42 22.01V509.21" stroke="#a4a4a4" stroke-width="1.1"/><path d="M332.61 22.01V509.21" stroke="#a4a4a4" stroke-width="1.1"/><path d="M380.8 22.01V509.21" stroke="#a4a4a4" stroke-width="1.1"/><path d="M428.99 22.01V509.21" stroke="#a4a4a4" stroke-width="1.1"/><path d="M477.18 22.01V509.21" stroke="#a4a4a4" stroke-width="1.1"/><path d="M525.37 22.01V509.21" stroke="#a4a4a4" stroke-width="1.1"/><path d="M573.56 22.01V509.21" stroke="#a4a4a4" stroke-width="1.1"/><path d="M621.75 22.01V509.21" stroke="#a4a4a4" stroke-width="1.1"/><path d="M669.94 22.01V509.21" stroke="#a4a4a4" stroke-width="1.1"/><path d="M718.13 22.01V509.21" stroke="#a4a4a4" stroke-width="1.1"/><path d="M766.32 22.01V509.21" stroke="#a4a4a4" stroke-width="1.1"/><path d="M814.51 22.01V509.21" stroke="#a4a4a4" stroke-width="1.1"/><path d="M862.69 22.01V509.21" stroke="#a4a4a4" stroke-width="1.1"/><path d="M910.88 22.01V509.21" stroke="#a4a4a4" stroke-width="1.1"/><path d="M0.15 26.26H4.92V38.25H14.56V26.26H24.2V38.25H33.84V26.26H43.47V38.25H53.11V26.26H62.75V38.25H72.39V26.26H82.03V38.25H91.66V26.26H101.3V38.25H110.94V26.26H120.58V38.25H130.22V26.26H139.85V38.25H149.49V26.26H159.13V38.25H168.77V26.26H178.4V38.25H188.04V26.26H197.68V38.25H207.32V26.26H216.96V38.25H226.59V26.26H236.23V38.25H245.87V26.26H255.51V38.25H265.15V26.26H274.78V38.25H284.42V26.26H294.06V38.25H303.7V26.26H313.33V38.25H322.97V26.26H332.61V38.25H342.25V26.26H351.89V38.25H361.52V26.26H371.16V38.25H380.8V26.26H390.44V38.25H400.08V26.26H409.71V38.25H419.35V26.26H428.99V38.25H438.63V26.26H448.27V38.25H457.9V26.26H467.54V38.25H477.18V26.26H486.82V38.25H496.45V26.26H506.09V38.25H515.73V26.26H525.37V38.25H535.01V26.26H544.64V38.25H554.28V26.26H563.92V38.25H573.56V26.26H583.2V38.25H592.83V26.26H602.47V38.25H612.11V26.26H621.75V38.25H631.39V26.26H641.02V38.25H650.66V26.26H660.3V38.25H669.94V26.26H679.57V38.25H689.21V26.26H698.85V38.25H708.49V26.26H718.13V38.25H727.76V26.26H737.4V38.25H747.04V26.26H756.68V38.25H766.32V26.26H775.95V38.25H785.59V26.26H795.23V38.25H804.87V26.26H814.51V38.25H824.14V26.26H833.78V38.25H843.42V26.26H853.06V38.25H862.69V26.26H872.33V38.25H881.97V26.26H891.61V38.25H901.25V26.26H910.88V38.25H920.52V26.26H926.06" fill="none" stroke="#58d074" stroke-width="1.15"/><path d="M0.15 55.25H43.47V43.26H926.06" fill="none" stroke="#58d074" stroke-width="1.15"/><path d="M0.15 77.25H53.11V89.25H419.35V77.25H438.63V89.25H804.87V77.25H824.14V89.25H926.06" fill="none" stroke="#58d074" stroke-width="1.15"/><path d="M0.15 94.25H226.59V106.24H419.35V94.25H612.11V106.24H804.87V94.25H926.06" fill="none" stroke="#58d074" stroke-width="1.15"/><text x="0.95" y="71.03" font-size="10" fill="#ffffff" stroke="#ffffff" stroke-width=".3">0</text><text x="56.81" y="71.03" font-size="10" fill="#ffffff" stroke="#ffffff" stroke-width=".3">1</text><text x="76.09" y="71.03" font-size="10" fill="#ffffff" stroke="#ffffff" stroke-width=".3">2</text><text x="95.36" y="71.03" font-size="10" fill="#ffffff" stroke="#ffffff" stroke-width=".3">3</text><text x="114.64" y="71.03" font-size="10" fill="#ffffff" stroke="#ffffff" stroke-width=".3">4</text><text x="133.92" y="71.03" font-size="10" fill="#ffffff" stroke="#ffffff" stroke-width=".3">5</text><text x="153.19" y="71.03" font-size="10" fill="#ffffff" stroke="#ffffff" stroke-width=".3">6</text><text x="172.47" y="71.03" font-size="10" fill="#ffffff" stroke="#ffffff" stroke-width=".3">7</text><text x="191.74" y="71.03" font-size="10" fill="#ffffff" stroke="#ffffff" stroke-width=".3">8</text><text x="211.02" y="71.03" font-size="10" fill="#ffffff" stroke="#ffffff" stroke-width=".3">9</text><text x="230.29" y="71.03" font-size="10" fill="#ffffff" stroke="#ffffff" stroke-width=".3">10</text><text x="249.57" y="71.03" font-size="10" fill="#ffffff" stroke="#ffffff" stroke-width=".3">11</text><text x="268.85" y="71.03" font-size="10" fill="#ffffff" stroke="#ffffff" stroke-width=".3">12</text><text x="288.12" y="71.03" font-size="10" fill="#ffffff" stroke="#ffffff" stroke-width=".3">13</text><text x="307.4" y="71.03" font-size="10" fill="#ffffff" stroke="#ffffff" stroke-width=".3">14</text><text x="326.67" y="71.03" font-size="10" fill="#ffffff" stroke="#ffffff" stroke-width=".3">15</text><text x="345.95" y="71.03" font-size="10" fill="#ffffff" stroke="#ffffff" stroke-width=".3">16</text><text x="365.22" y="71.03" font-size="10" fill="#ffffff" stroke="#ffffff" stroke-width=".3">17</text><text x="384.5" y="71.03" font-size="10" fill="#ffffff" stroke="#ffffff" stroke-width=".3">18</text><text x="403.78" y="71.03" font-size="10" fill="#ffffff" stroke="#ffffff" stroke-width=".3">19</text><text x="423.05" y="71.03" font-size="10" fill="#ffffff" stroke="#ffffff" stroke-width=".3">0</text><text x="442.33" y="71.03" font-size="10" fill="#ffffff" stroke="#ffffff" stroke-width=".3">1</text><text x="461.6" y="71.03" font-size="10" fill="#ffffff" stroke="#ffffff" stroke-width=".3">2</text><text x="480.88" y="71.03" font-size="10" fill="#ffffff" stroke="#ffffff" stroke-width=".3">3</text><text x="500.15" y="71.03" font-size="10" fill="#ffffff" stroke="#ffffff" stroke-width=".3">4</text><text x="519.43" y="71.03" font-size="10" fill="#ffffff" stroke="#ffffff" stroke-width=".3">5</text><text x="538.71" y="71.03" font-size="10" fill="#ffffff" stroke="#ffffff" stroke-width=".3">6</text><text x="557.98" y="71.03" font-size="10" fill="#ffffff" stroke="#ffffff" stroke-width=".3">7</text><text x="577.26" y="71.03" font-size="10" fill="#ffffff" stroke="#ffffff" stroke-width=".3">8</text><text x="596.53" y="71.03" font-size="10" fill="#ffffff" stroke="#ffffff" stroke-width=".3">9</text><text x="615.81" y="71.03" font-size="10" fill="#ffffff" stroke="#ffffff" stroke-width=".3">10</text><text x="635.09" y="71.03" font-size="10" fill="#ffffff" stroke="#ffffff" stroke-width=".3">11</text><text x="654.36" y="71.03" font-size="10" fill="#ffffff" stroke="#ffffff" stroke-width=".3">12</text><text x="673.64" y="71.03" font-size="10" fill="#ffffff" stroke="#ffffff" stroke-width=".3">13</text><text x="692.91" y="71.03" font-size="10" fill="#ffffff" stroke="#ffffff" stroke-width=".3">14</text><text x="712.19" y="71.03" font-size="10" fill="#ffffff" stroke="#ffffff" stroke-width=".3">15</text><text x="731.46" y="71.03" font-size="10" fill="#ffffff" stroke="#ffffff" stroke-width=".3">16</text><text x="750.74" y="71.03" font-size="10" fill="#ffffff" stroke="#ffffff" stroke-width=".3">17</text><text x="770.02" y="71.03" font-size="10" fill="#ffffff" stroke="#ffffff" stroke-width=".3">18</text><text x="789.29" y="71.03" font-size="10" fill="#ffffff" stroke="#ffffff" stroke-width=".3">19</text><text x="808.57" y="71.03" font-size="10" fill="#ffffff" stroke="#ffffff" stroke-width=".3">0</text><text x="827.84" y="71.03" font-size="10" fill="#ffffff" stroke="#ffffff" stroke-width=".3">1</text><text x="847.12" y="71.03" font-size="10" fill="#ffffff" stroke="#ffffff" stroke-width=".3">2</text><text x="866.39" y="71.03" font-size="10" fill="#ffffff" stroke="#ffffff" stroke-width=".3">3</text><text x="885.67" y="71.03" font-size="10" fill="#ffffff" stroke="#ffffff" stroke-width=".3">4</text><text x="904.95" y="71.03" font-size="10" fill="#ffffff" stroke="#ffffff" stroke-width=".3">5</text><text x="924.22" y="71.03" font-size="10" fill="#ffffff" stroke="#ffffff" stroke-width=".3">6</text><path d="M0.15 61.32H51.61M54.61 61.32H70.89M73.89 61.32H90.16M93.16 61.32H109.44M112.44 61.32H128.72M131.72 61.32H147.99M150.99 61.32H167.27M170.27 61.32H186.54M189.54 61.32H205.82M208.82 61.32H225.09M228.09 61.32H244.37M247.37 61.32H263.65M266.65 61.32H282.92M285.92 61.32H302.2M305.2 61.32H321.47M324.47 61.32H340.75M343.75 61.32H360.02M363.02 61.32H379.3M382.3 61.32H398.58M401.58 61.32H417.85M420.85 61.32H437.13M440.13 61.32H456.4M459.4 61.32H475.68M478.68 61.32H494.95M497.95 61.32H514.23M517.23 61.32H533.51M536.51 61.32H552.78M555.78 61.32H572.06M575.06 61.32H591.33M594.33 61.32H610.61M613.61 61.32H629.89M632.89 61.32H649.16M652.16 61.32H668.44M671.44 61.32H687.71M690.71 61.32H706.99M709.99 61.32H726.26M729.26 61.32H745.54M748.54 61.32H764.82M767.82 61.32H784.09M787.09 61.32H803.37M806.37 61.32H822.64M825.64 61.32H841.92M844.92 61.32H861.19M864.19 61.32H880.47M883.47 61.32H899.75M902.75 61.32H919.02M922.02 61.32H926.06" fill="none" stroke="#7b867b" stroke-width="1"/><path d="M0.15 72.25H51.61M51.61 61.32L54.61 72.25M51.61 72.25L54.61 61.32M54.61 72.25H70.89M70.89 61.32L73.89 72.25M70.89 72.25L73.89 61.32M73.89 72.25H90.16M90.16 61.32L93.16 72.25M90.16 72.25L93.16 61.32M93.16 72.25H109.44M109.44 61.32L112.44 72.25M109.44 72.25L112.44 61.32M112.44 72.25H128.72M128.72 61.32L131.72 72.25M128.72 72.25L131.72 61.32M131.72 72.25H147.99M147.99 61.32L150.99 72.25M147.99 72.25L150.99 61.32M150.99 72.25H167.27M167.27 61.32L170.27 72.25M167.27 72.25L170.27 61.32M170.27 72.25H186.54M186.54 61.32L189.54 72.25M186.54 72.25L189.54 61.32M189.54 72.25H205.82M205.82 61.32L208.82 72.25M205.82 72.25L208.82 61.32M208.82 72.25H225.09M225.09 61.32L228.09 72.25M225.09 72.25L228.09 61.32M228.09 72.25H244.37M244.37 61.32L247.37 72.25M244.37 72.25L247.37 61.32M247.37 72.25H263.65M263.65 61.32L266.65 72.25M263.65 72.25L266.65 61.32M266.65 72.25H282.92M282.92 61.32L285.92 72.25M282.92 72.25L285.92 61.32M285.92 72.25H302.2M302.2 61.32L305.2 72.25M302.2 72.25L305.2 61.32M305.2 72.25H321.47M321.47 61.32L324.47 72.25M321.47 72.25L324.47 61.32M324.47 72.25H340.75M340.75 61.32L343.75 72.25M340.75 72.25L343.75 61.32M343.75 72.25H360.02M360.02 61.32L363.02 72.25M360.02 72.25L363.02 61.32M363.02 72.25H379.3M379.3 61.32L382.3 72.25M379.3 72.25L382.3 61.32M382.3 72.25H398.58M398.58 61.32L401.58 72.25M398.58 72.25L401.58 61.32M401.58 72.25H417.85M417.85 61.32L420.85 72.25M417.85 72.25L420.85 61.32M420.85 72.25H437.13M437.13 61.32L440.13 72.25M437.13 72.25L440.13 61.32M440.13 72.25H456.4M456.4 61.32L459.4 72.25M456.4 72.25L459.4 61.32M459.4 72.25H475.68M475.68 61.32L478.68 72.25M475.68 72.25L478.68 61.32M478.68 72.25H494.95M494.95 61.32L497.95 72.25M494.95 72.25L497.95 61.32M497.95 72.25H514.23M514.23 61.32L517.23 72.25M514.23 72.25L517.23 61.32M517.23 72.25H533.51M533.51 61.32L536.51 72.25M533.51 72.25L536.51 61.32M536.51 72.25H552.78M552.78 61.32L555.78 72.25M552.78 72.25L555.78 61.32M555.78 72.25H572.06M572.06 61.32L575.06 72.25M572.06 72.25L575.06 61.32M575.06 72.25H591.33M591.33 61.32L594.33 72.25M591.33 72.25L594.33 61.32M594.33 72.25H610.61M610.61 61.32L613.61 72.25M610.61 72.25L613.61 61.32M613.61 72.25H629.89M629.89 61.32L632.89 72.25M629.89 72.25L632.89 61.32M632.89 72.25H649.16M649.16 61.32L652.16 72.25M649.16 72.25L652.16 61.32M652.16 72.25H668.44M668.44 61.32L671.44 72.25M668.44 72.25L671.44 61.32M671.44 72.25H687.71M687.71 61.32L690.71 72.25M687.71 72.25L690.71 61.32M690.71 72.25H706.99M706.99 61.32L709.99 72.25M706.99 72.25L709.99 61.32M709.99 72.25H726.26M726.26 61.32L729.26 72.25M726.26 72.25L729.26 61.32M729.26 72.25H745.54M745.54 61.32L748.54 72.25M745.54 72.25L748.54 61.32M748.54 72.25H764.82M764.82 61.32L767.82 72.25M764.82 72.25L767.82 61.32M767.82 72.25H784.09M784.09 61.32L787.09 72.25M784.09 72.25L787.09 61.32M787.09 72.25H803.37M803.37 61.32L806.37 72.25M803.37 72.25L806.37 61.32M806.37 72.25H822.64M822.64 61.32L825.64 72.25M822.64 72.25L825.64 61.32M825.64 72.25H841.92M841.92 61.32L844.92 72.25M841.92 72.25L844.92 61.32M844.92 72.25H861.19M861.19 61.32L864.19 72.25M861.19 72.25L864.19 61.32M864.19 72.25H880.47M880.47 61.32L883.47 72.25M880.47 72.25L883.47 61.32M883.47 72.25H899.75M899.75 61.32L902.75 72.25M899.75 72.25L902.75 61.32M902.75 72.25H919.02M919.02 61.32L922.02 72.25M919.02 72.25L922.02 61.32M922.02 72.25H926.06" fill="none" stroke="#c9d2c9" stroke-width="1.1"/><rect x="0" y="509.21" width="926.3" height="2.43" fill="#d6d6d6"/><path d="M4.92 514.98V519.23" stroke="#8aa08e" stroke-width="1.1"/><path d="M24.2 514.98V519.23" stroke="#8aa08e" stroke-width="1.1"/><path d="M43.47 514.98V519.23" stroke="#8aa08e" stroke-width="1.1"/><path d="M62.75 514.98V519.23" stroke="#8aa08e" stroke-width="1.1"/><path d="M82.03 514.98V519.23" stroke="#8aa08e" stroke-width="1.1"/><path d="M101.3 514.98V519.23" stroke="#8aa08e" stroke-width="1.1"/><path d="M120.58 514.98V519.23" stroke="#8aa08e" stroke-width="1.1"/><path d="M139.85 511.64V523.18" stroke="#3fc455" stroke-width="1.2"/><text x="139.85" y="532.74" font-size="10.6" fill="#42f062" stroke="#42f062" stroke-width=".25" text-anchor="middle">400000 ps</text><path d="M159.13 514.98V519.23" stroke="#8aa08e" stroke-width="1.1"/><path d="M178.4 514.98V519.23" stroke="#8aa08e" stroke-width="1.1"/><path d="M197.68 514.98V519.23" stroke="#8aa08e" stroke-width="1.1"/><path d="M216.96 514.98V519.23" stroke="#8aa08e" stroke-width="1.1"/><path d="M236.23 514.98V519.23" stroke="#8aa08e" stroke-width="1.1"/><path d="M255.51 514.98V519.23" stroke="#8aa08e" stroke-width="1.1"/><path d="M274.78 514.98V519.23" stroke="#8aa08e" stroke-width="1.1"/><path d="M294.06 514.98V519.23" stroke="#8aa08e" stroke-width="1.1"/><path d="M313.33 514.98V519.23" stroke="#8aa08e" stroke-width="1.1"/><path d="M332.61 511.64V523.18" stroke="#3fc455" stroke-width="1.2"/><text x="332.61" y="532.74" font-size="10.6" fill="#42f062" stroke="#42f062" stroke-width=".25" text-anchor="middle">800000 ps</text><path d="M351.89 514.98V519.23" stroke="#8aa08e" stroke-width="1.1"/><path d="M371.16 514.98V519.23" stroke="#8aa08e" stroke-width="1.1"/><path d="M390.44 514.98V519.23" stroke="#8aa08e" stroke-width="1.1"/><path d="M409.71 514.98V519.23" stroke="#8aa08e" stroke-width="1.1"/><path d="M428.99 514.98V519.23" stroke="#8aa08e" stroke-width="1.1"/><path d="M448.27 514.98V519.23" stroke="#8aa08e" stroke-width="1.1"/><path d="M467.54 514.98V519.23" stroke="#8aa08e" stroke-width="1.1"/><path d="M486.82 514.98V519.23" stroke="#8aa08e" stroke-width="1.1"/><path d="M506.09 514.98V519.23" stroke="#8aa08e" stroke-width="1.1"/><path d="M525.37 511.64V523.18" stroke="#3fc455" stroke-width="1.2"/><text x="525.37" y="532.74" font-size="10.6" fill="#42f062" stroke="#42f062" stroke-width=".25" text-anchor="middle">1200000 ps</text><path d="M544.64 514.98V519.23" stroke="#8aa08e" stroke-width="1.1"/><path d="M563.92 514.98V519.23" stroke="#8aa08e" stroke-width="1.1"/><path d="M583.2 514.98V519.23" stroke="#8aa08e" stroke-width="1.1"/><path d="M602.47 514.98V519.23" stroke="#8aa08e" stroke-width="1.1"/><path d="M621.75 514.98V519.23" stroke="#8aa08e" stroke-width="1.1"/><path d="M641.02 514.98V519.23" stroke="#8aa08e" stroke-width="1.1"/><path d="M660.3 514.98V519.23" stroke="#8aa08e" stroke-width="1.1"/><path d="M679.57 514.98V519.23" stroke="#8aa08e" stroke-width="1.1"/><path d="M698.85 514.98V519.23" stroke="#8aa08e" stroke-width="1.1"/><path d="M718.13 511.64V523.18" stroke="#3fc455" stroke-width="1.2"/><text x="718.13" y="532.74" font-size="10.6" fill="#42f062" stroke="#42f062" stroke-width=".25" text-anchor="middle">1600000 ps</text><path d="M737.4 514.98V519.23" stroke="#8aa08e" stroke-width="1.1"/><path d="M756.68 514.98V519.23" stroke="#8aa08e" stroke-width="1.1"/><path d="M775.95 514.98V519.23" stroke="#8aa08e" stroke-width="1.1"/><path d="M795.23 514.98V519.23" stroke="#8aa08e" stroke-width="1.1"/><path d="M814.51 514.98V519.23" stroke="#8aa08e" stroke-width="1.1"/><path d="M833.78 514.98V519.23" stroke="#8aa08e" stroke-width="1.1"/><path d="M853.06 514.98V519.23" stroke="#8aa08e" stroke-width="1.1"/><path d="M872.33 514.98V519.23" stroke="#8aa08e" stroke-width="1.1"/><path d="M891.61 514.98V519.23" stroke="#8aa08e" stroke-width="1.1"/><path d="M910.88 511.64V523.18" stroke="#3fc455" stroke-width="1.2"/><text x="910.88" y="532.74" font-size="10.6" fill="#42f062" stroke="#42f062" stroke-width=".25" text-anchor="middle">2000000 ps</text><path d="M0 534.26H926.3" stroke="#a9a9a9" stroke-width="1"/><path d="M44.37 21.7V509.21" stroke="#c0392b" stroke-width="1" opacity=".7"/><path d="M43.47 0V534.26" stroke="#ffd95e" stroke-width="2.4"/><rect x="17.0" y="535.62" width="53.27" height="15.18" fill="#14120a" stroke="#b9973c" stroke-width="1.1"/><text x="43.63" y="547.92" font-size="10.6" fill="#f3e7b4" text-anchor="middle">200000 ps</text></svg>
<div class="" style="left:4.25px;top:686.04px;width:7.89px;height:16.54px;background:#808080"></div>
<div class="" style="left:12.14px;top:686.04px;width:296.57px;height:16.54px;background:#f3f3f3;border-top:1px solid #e2e2e2;border-bottom:1px solid #dadada"></div>
<div class="btn" style="left:12.14px;top:686.04px;width:17.0px;height:16.54px;"></div>
<svg style="left:16.49px;top:689.31px" width="8" height="10" viewBox="0 0 8 10"><path d="M6 1v8L2 5z" fill="#a8a8a8"/></svg>
<div class="btn" style="left:293.23px;top:686.04px;width:14.87px;height:16.54px;"></div>
<svg style="left:296.82px;top:689.31px" width="8" height="10" viewBox="0 0 8 10"><path d="M2 1v8l4-4z" fill="#a8a8a8"/></svg>
<div class="" style="left:312.06px;top:686.04px;width:100.48px;height:16.54px;background:#fafafa;border-top:1px solid #e2e2e2;border-bottom:1px solid #dadada"></div>
<div class="btn" style="left:312.36px;top:686.04px;width:16.09px;height:16.54px;"></div>
<svg style="left:316.55px;top:689.31px" width="8" height="10" viewBox="0 0 8 10"><path d="M6 1v8L2 5z" fill="#111"/></svg>
<div class="btn" style="left:328.45px;top:686.04px;width:45.99px;height:16.54px;"></div>
<div class="btn" style="left:394.93px;top:686.04px;width:16.39px;height:16.54px;"></div>
<svg style="left:399.43px;top:689.31px" width="8" height="10" viewBox="0 0 8 10"><path d="M2 1v8l4-4z" fill="#111"/></svg>
<div class="" style="left:415.11px;top:686.04px;width:944.82px;height:16.54px;background:#c9c9c9"></div>
<div class="btn" style="left:415.87px;top:686.04px;width:15.18px;height:16.54px;"></div>
<svg style="left:419.76px;top:689.31px" width="8" height="10" viewBox="0 0 8 10"><path d="M6 1v8L2 5z" fill="#111"/></svg>
<div class="" style="left:466.87px;top:686.04px;width:637.47px;height:16.54px;background:#f4f4ee;border:1px solid #fff;border-right-color:#8a8a8a;border-bottom-color:#8a8a8a"></div>
<div class="" style="left:497.98px;top:686.95px;width:1.21px;height:14.42px;background:#ece48a"></div>
<div class="" style="left:0.0px;top:704.25px;width:1366.0px;height:2.43px;background:#e6e6e6"></div>
<div class="" style="left:0.0px;top:706.68px;width:1366.0px;height:20.34px;background:#f0f0f0"></div>
<div class="" style="left:2.43px;top:708.2px;width:167.56px;height:17.3px;background:#f1f1f1;border:1px solid #9a9a9a;border-right-color:#fff;border-bottom-color:#fff"></div>
<div class="" style="left:171.81px;top:708.2px;width:1191.15px;height:17.3px;background:#f1f1f1;border:1px solid #9a9a9a;border-right-color:#fff;border-bottom-color:#fff"></div>
<div class="t" style="left:10.32px;top:709.15px;height:16px;line-height:16px;font-size:10.7px;color:#111">110100 ps to 2031500 ps</div>
<div class="t" style="left:179.55px;top:709.15px;height:16px;line-height:16px;font-size:10.8px;color:#111">/Clock_div_test/Clock_div_uut/rst_n_in</div>
<div class="" style="left:2.28px;top:63.75px;width:1.06px;height:642.02px;background:#bdbdbd"></div>
<div class="" style="left:1359.93px;top:127.49px;width:2.43px;height:578.27px;background:#d6d6d6"></div>
<div class="" style="left:1362.36px;top:63.75px;width:3.64px;height:642.02px;background:#f8f8f8"></div>
<div class="btn" style="left:1323.5px;top:686.04px;width:15.78px;height:16.54px;"></div>
<svg style="left:1327.7px;top:689.31px" width="8" height="10" viewBox="0 0 8 10"><path d="M2 1v8l4-4z" fill="#111"/></svg>
<div class="" style="left:1238.51px;top:683.3px;width:127.49px;height:48.27px;background:rgba(250,250,250,.62);border-radius:24px 14px 14px 24px;"></div>
<div class="" style="left:1239.42px;top:680.42px;width:45.84px;height:46.14px;background:rgba(249,172,112,.88);border-radius:50%;border:2px solid rgba(251,205,170,.9)"></div>
<div class="t" style="left:1112.49px;width:300px;text-align:center;top:695.64px;height:16px;line-height:16px;font-size:11px;color:#fad0b0">80%</div>
<div class="t" style="left:1293.15px;top:688.05px;height:16px;line-height:16px;font-size:9px;color:#a4a4a4">↑</div>
<div class="t" style="left:1293.15px;top:704.75px;height:16px;line-height:16px;font-size:9px;color:#a4a4a4">↓</div>
<div class="t" style="right:30.96px;top:688.05px;height:16px;line-height:16px;font-size:8.5px;color:#808080">0K/s</div>
<div class="t" style="right:30.96px;top:704.75px;height:16px;line-height:16px;font-size:8.5px;color:#909090">0.1K/s</div>
<div class="" style="left:1340.5px;top:692.11px;width:20.03px;height:20.03px;background:#5b8fdf;border-radius:50%;box-shadow:0 0 3px #7aa6ea"></div>
<div class="t" style="left:1200.52px;width:300px;text-align:center;top:693.82px;height:16px;line-height:16px;font-size:12px;color:#cfe0ff">+</div>
<div class="" style="left:1353.25px;top:689.98px;width:7.59px;height:7.59px;background:#d46058;border-radius:50%"></div>
</div></body></html>
